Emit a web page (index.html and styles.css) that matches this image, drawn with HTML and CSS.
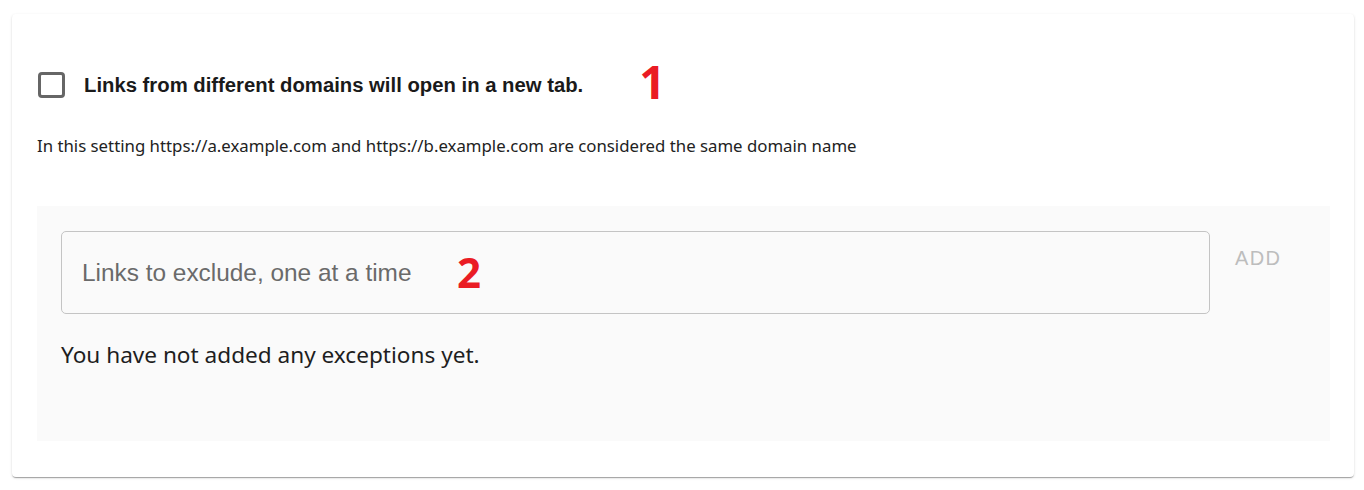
FILE: index.html
```html
<!DOCTYPE html>
<html lang="en">
<head>
<meta charset="utf-8">
<title>Settings</title>
<link rel="stylesheet" href="styles.css">
</head>
<body>
<div class="card">
  <div class="option-row">
    <label class="check">
      <input type="checkbox" class="check-input">
      <span class="check-box"></span>
      <span class="check-label">Links from different domains will open in a new tab.</span>
    </label>
    <span class="marker marker-one">1</span>
  </div>
  <p class="hint">In this setting https://a.example.com and https://b.example.com are considered the same domain name</p>
  <div class="panel">
    <div class="add-row">
      <div class="field">
        <input type="text" class="field-input" placeholder="Links to exclude, one at a time">
        <span class="marker marker-two">2</span>
      </div>
      <button type="button" class="add-btn" disabled>ADD</button>
    </div>
    <p class="empty">You have not added any exceptions yet.</p>
  </div>
</div>
</body>
</html>
```

FILE: styles.css
```css
html, body {
  margin: 0;
  padding: 0;
  background: #ffffff;
}

body {
  padding: 14px 10px 13px 12px;
  font-family: "Noto Sans", "Open Sans", sans-serif;
  color: #212121;
}

.card {
  background: #ffffff;
  border-radius: 4px;
  height: 463px;
  box-sizing: border-box;
  padding: 58px 24px 36px 25px;
  box-shadow: 0 2px 1px -1px rgba(0,0,0,0.2), 0 1px 1px 0 rgba(0,0,0,0.14), 0 1px 3px 0 rgba(0,0,0,0.12);
}

.option-row {
  display: flex;
  align-items: center;
  height: 26px;
}

.check {
  display: flex;
  align-items: center;
  cursor: pointer;
}

.check-input {
  position: absolute;
  opacity: 0;
  width: 0;
  height: 0;
  margin: 0;
}

.check-box {
  width: 27px;
  height: 26px;
  box-sizing: border-box;
  border: 3px solid #666666;
  border-radius: 4px;
  margin-left: 1px;
}

.check-label {
  margin-left: 19px;
  font-family: "Liberation Sans", Arial, sans-serif;
  font-weight: bold;
  font-size: 20.3px;
  color: #1a1a1a;
}

.marker {
  font-family: "Open Sans", "Noto Sans", sans-serif;
  font-weight: bold;
  color: #ea1c24;
  line-height: 1;
}

.marker-one {
  font-size: 46px;
  margin-left: 56px;
  margin-top: -8px;
}

.hint {
  margin: 37px 0 0 0;
  font-size: 16.8px;
  line-height: 22px;
  color: #222222;
}

.panel {
  margin-top: 49px;
  background: #fafafa;
  height: 235px;
  box-sizing: border-box;
  padding: 25px 0 0 24px;
}

.add-row {
  display: flex;
  align-items: flex-start;
}

.field {
  position: relative;
  flex: 1;
}

.field-input {
  display: block;
  width: 100%;
  height: 83px;
  box-sizing: border-box;
  border: 1px solid #c4c4c4;
  border-radius: 5px;
  background: #fafafa;
  padding: 0 20px;
  font-family: "Liberation Sans", Arial, sans-serif;
  font-size: 24.4px;
  color: #333333;
  outline: none;
}

.field-input::placeholder {
  color: #6a6a6a;
  opacity: 1;
}

.marker-two {
  position: absolute;
  left: 396px;
  top: 20px;
  font-size: 42px;
}

.add-btn {
  margin: 9px 34px 0 9px;
  padding: 6px 16px;
  width: 77px;
  border: none;
  background: transparent;
  font-family: "Liberation Sans", Arial, sans-serif;
  font-size: 20px;
  letter-spacing: 1.3px;
  color: #bdbdbd;
  line-height: 24px;
}

.empty {
  margin: 26px 0 0 0;
  font-size: 22.6px;
  line-height: 30px;
  color: #1e1e1e;
}
```
